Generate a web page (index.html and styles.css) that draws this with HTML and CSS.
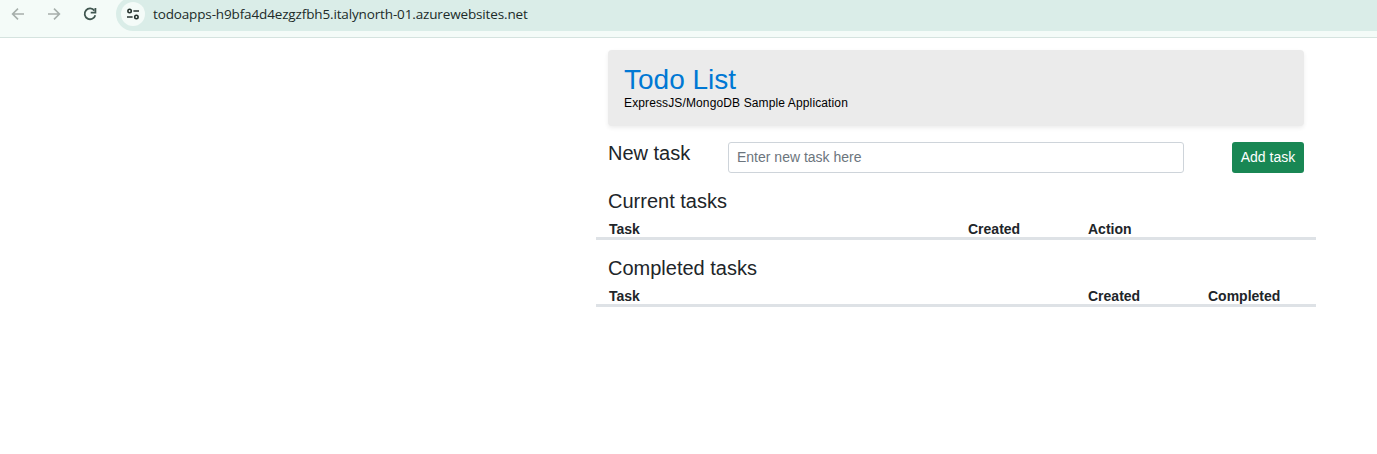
FILE: index.html
```html
<!DOCTYPE html>
<html lang="en">
<head>
<meta charset="utf-8">
<title>Todo List</title>
<link rel="stylesheet" href="styles.css">
</head>
<body>
<header class="toolbar">
  <nav class="nav">
    <svg class="icon muted" viewBox="0 0 16 16"><path d="M14 8H3M8 2.6 2.6 8 8 13.4"/></svg>
    <svg class="icon muted" viewBox="0 0 16 16"><path d="M2 8h11M8 2.6 13.4 8 8 13.4"/></svg>
    <svg class="icon reload" viewBox="0 0 16 16"><path d="M12.4 4.6A5.4 5.4 0 1 0 13.3 9.2"/><path d="M13.4 1.9v4.7H8.7"/></svg>
  </nav>
  <div class="omnibox">
    <span class="site-info">
      <svg class="icon tune" viewBox="0 0 16 16"><circle cx="4.6" cy="5" r="1.7"/><path d="M8.4 5H14M2 11h5.6"/><circle cx="11.4" cy="11" r="1.7"/></svg>
    </span>
    <span class="url">todoapps-h9bfa4d4ezgzfbh5.italynorth-01.azurewebsites.net</span>
  </div>
</header>
<main class="page">
  <section class="banner">
    <h1 class="title">Todo List</h1>
    <p class="subtitle">ExpressJS/MongoDB Sample Application</p>
  </section>
  <form class="new-task">
    <h2 class="heading">New task</h2>
    <input class="field" type="text" placeholder="Enter new task here">
    <button class="add" type="button">Add task</button>
  </form>
  <section class="tasks">
    <h2 class="heading">Current tasks</h2>
    <div class="table-head current"><span>Task</span><span>Created</span><span>Action</span></div>
  </section>
  <section class="tasks">
    <h2 class="heading">Completed tasks</h2>
    <div class="table-head completed"><span>Task</span><span>Created</span><span>Completed</span></div>
  </section>
</main>
</body>
</html>
```
FILE: styles.css
```css
* { box-sizing: border-box; }
body {
  margin: 0;
  background: #fff;
  color: #212529;
  font: 14px/21px "Liberation Sans", Arial, sans-serif;
}
h1, h2, p { margin: 0; font-weight: 400; }

.toolbar {
  display: flex;
  align-items: flex-start;
  height: 38px;
  overflow: hidden;
  background: #f4fbf8;
  border-bottom: 1px solid #d5e3df;
}
.nav { display: flex; gap: 20px; padding: 6px 18px 0 10px; }
.icon {
  display: block;
  width: 16px;
  height: 16px;
  fill: none;
  stroke: #26332f;
  stroke-width: 1.6;
}
.muted { stroke: #a6afab; }
.reload { stroke: #405650; stroke-width: 1.8; }
.omnibox {
  display: flex;
  flex: 1;
  align-items: center;
  height: 34px;
  margin-top: -3px;
  padding-left: 5px;
  background: #daede8;
  border-radius: 17px 0 0 17px;
}
.site-info {
  display: grid;
  place-items: center;
  width: 24px;
  height: 24px;
  background: #f4fbf8;
  border-radius: 50%;
}
.url {
  margin-left: 8px;
  color: #202b28;
  font: 13.5px/20px "Open Sans", "Noto Sans", sans-serif;
  letter-spacing: -0.14px;
  white-space: nowrap;
}

.page { width: 720px; margin-left: 596px; padding-top: 12px; }
.banner {
  height: 76px;
  margin: 0 12px 16px;
  padding: 13px 16px;
  background: #ebebeb;
  border-radius: 4px;
  box-shadow: 0 2px 4px rgba(0, 0, 0, .075);
}
.title { color: #0078d4; font-size: 28px; line-height: 33px; }
.subtitle { color: #000; font-size: 12px; line-height: 14px; letter-spacing: .125px; }

.new-task {
  display: grid;
  grid-template-columns: 120px 456px 1fr;
  margin: 0 12px 16px;
}
.heading { font-size: 20px; line-height: 24px; }
.new-task .heading { line-height: 22px; }
.field {
  height: 31px;
  padding: 3px 8px 5px;
  border: 1px solid #ced4da;
  border-radius: 3px;
  font: inherit;
}
.field::placeholder { color: #6c757d; opacity: 1; }
.add {
  justify-self: end;
  width: 72px;
  height: 31px;
  padding: 0;
  border: 0;
  border-radius: 3px;
  background: #198754;
  color: #fff;
  font: inherit;
}
.tasks { margin-bottom: 16px; }
.tasks .heading { margin: 0 12px 5px; }
.table-head {
  display: grid;
  height: 22px;
  padding-left: 13px;
  border-bottom: 3px solid #dee2e6;
  font-weight: 700;
  line-height: 23px;
}
.current { grid-template-columns: 359px 120px 1fr; }
.completed { grid-template-columns: 479px 120px 1fr; }
```
